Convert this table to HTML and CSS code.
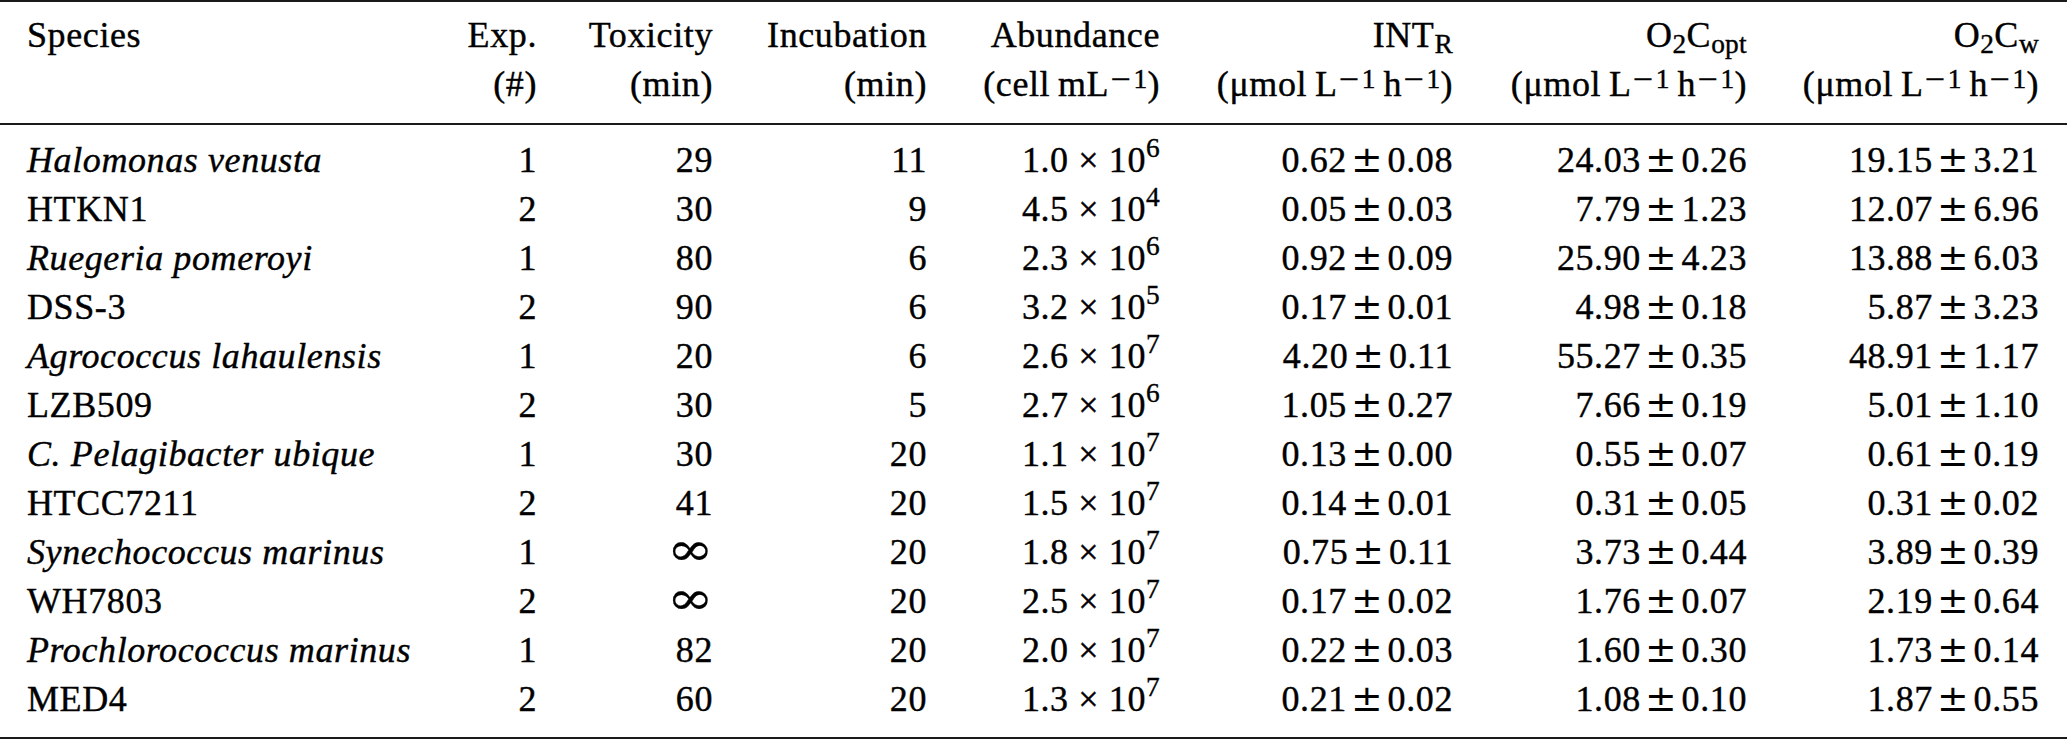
FILE: index.html
```html
<!DOCTYPE html>
<html lang="en">
<head>
<meta charset="utf-8">
<title>Species table</title>
<link rel="stylesheet" href="styles.css">
</head>
<body>
<div class="table">
  <div class="head">
    <div class="row">
      <div class="c first">Species</div>
      <div class="c">Exp.</div>
      <div class="c">Toxicity</div>
      <div class="c">Incubation</div>
      <div class="c">Abundance</div>
      <div class="c">INT<sub>R</sub></div>
      <div class="c">O<sub>2</sub>C<sub>opt</sub></div>
      <div class="c last">O<sub>2</sub>C<sub>w</sub></div>
    </div>
    <div class="row">
      <div class="c first"></div>
      <div class="c">(#)</div>
      <div class="c">(min)</div>
      <div class="c">(min)</div>
      <div class="c">(cell&#8201;mL<sup class="u"><span class="mi">&minus;</span>1</sup>)</div>
      <div class="c">(μmol&#8201;L<sup class="u"><span class="mi">&minus;</span>1</sup>&#8201;h<sup class="u"><span class="mi">&minus;</span>1</sup>)</div>
      <div class="c">(μmol&#8201;L<sup class="u"><span class="mi">&minus;</span>1</sup>&#8201;h<sup class="u"><span class="mi">&minus;</span>1</sup>)</div>
      <div class="c last">(μmol&#8201;L<sup class="u"><span class="mi">&minus;</span>1</sup>&#8201;h<sup class="u"><span class="mi">&minus;</span>1</sup>)</div>
    </div>
  </div>
  <div class="body">
    <div class="row"><div class="c first it">Halomonas venusta</div><div class="c">1</div><div class="c">29</div><div class="c">11</div><div class="c">1.0 × 10<sup>6</sup></div><div class="c">0.62<span class="pm">±</span>0.08</div><div class="c">24.03<span class="pm">±</span>0.26</div><div class="c last">19.15<span class="pm">±</span>3.21</div></div>
    <div class="row"><div class="c first">HTKN1</div><div class="c">2</div><div class="c">30</div><div class="c">9</div><div class="c">4.5 × 10<sup>4</sup></div><div class="c">0.05<span class="pm">±</span>0.03</div><div class="c">7.79<span class="pm">±</span>1.23</div><div class="c last">12.07<span class="pm">±</span>6.96</div></div>
    <div class="row"><div class="c first it">Ruegeria pomeroyi</div><div class="c">1</div><div class="c">80</div><div class="c">6</div><div class="c">2.3 × 10<sup>6</sup></div><div class="c">0.92<span class="pm">±</span>0.09</div><div class="c">25.90<span class="pm">±</span>4.23</div><div class="c last">13.88<span class="pm">±</span>6.03</div></div>
    <div class="row"><div class="c first">DSS-3</div><div class="c">2</div><div class="c">90</div><div class="c">6</div><div class="c">3.2 × 10<sup>5</sup></div><div class="c">0.17<span class="pm">±</span>0.01</div><div class="c">4.98<span class="pm">±</span>0.18</div><div class="c last">5.87<span class="pm">±</span>3.23</div></div>
    <div class="row"><div class="c first it">Agrococcus lahaulensis</div><div class="c">1</div><div class="c">20</div><div class="c">6</div><div class="c">2.6 × 10<sup>7</sup></div><div class="c">4.20<span class="pm">±</span>0.11</div><div class="c">55.27<span class="pm">±</span>0.35</div><div class="c last">48.91<span class="pm">±</span>1.17</div></div>
    <div class="row"><div class="c first">LZB509</div><div class="c">2</div><div class="c">30</div><div class="c">5</div><div class="c">2.7 × 10<sup>6</sup></div><div class="c">1.05<span class="pm">±</span>0.27</div><div class="c">7.66<span class="pm">±</span>0.19</div><div class="c last">5.01<span class="pm">±</span>1.10</div></div>
    <div class="row"><div class="c first it">C. Pelagibacter ubique</div><div class="c">1</div><div class="c">30</div><div class="c">20</div><div class="c">1.1 × 10<sup>7</sup></div><div class="c">0.13<span class="pm">±</span>0.00</div><div class="c">0.55<span class="pm">±</span>0.07</div><div class="c last">0.61<span class="pm">±</span>0.19</div></div>
    <div class="row"><div class="c first">HTCC7211</div><div class="c">2</div><div class="c">41</div><div class="c">20</div><div class="c">1.5 × 10<sup>7</sup></div><div class="c">0.14<span class="pm">±</span>0.01</div><div class="c">0.31<span class="pm">±</span>0.05</div><div class="c last">0.31<span class="pm">±</span>0.02</div></div>
    <div class="row"><div class="c first it">Synechococcus marinus</div><div class="c">1</div><div class="c"><span class="inf">∞</span></div><div class="c">20</div><div class="c">1.8 × 10<sup>7</sup></div><div class="c">0.75<span class="pm">±</span>0.11</div><div class="c">3.73<span class="pm">±</span>0.44</div><div class="c last">3.89<span class="pm">±</span>0.39</div></div>
    <div class="row"><div class="c first">WH7803</div><div class="c">2</div><div class="c"><span class="inf">∞</span></div><div class="c">20</div><div class="c">2.5 × 10<sup>7</sup></div><div class="c">0.17<span class="pm">±</span>0.02</div><div class="c">1.76<span class="pm">±</span>0.07</div><div class="c last">2.19<span class="pm">±</span>0.64</div></div>
    <div class="row"><div class="c first it">Prochlorococcus marinus</div><div class="c">1</div><div class="c">82</div><div class="c">20</div><div class="c">2.0 × 10<sup>7</sup></div><div class="c">0.22<span class="pm">±</span>0.03</div><div class="c">1.60<span class="pm">±</span>0.30</div><div class="c last">1.73<span class="pm">±</span>0.14</div></div>
    <div class="row"><div class="c first">MED4</div><div class="c">2</div><div class="c">60</div><div class="c">20</div><div class="c">1.3 × 10<sup>7</sup></div><div class="c">0.21<span class="pm">±</span>0.02</div><div class="c">1.08<span class="pm">±</span>0.10</div><div class="c last">1.87<span class="pm">±</span>0.55</div></div>
  </div>
</div>
</body>
</html>
```

FILE: styles.css
```css
html, body {
  margin: 0;
  padding: 0;
  background: #ffffff;
}

body {
  font-family: "Liberation Serif", "Times New Roman", serif;
  font-size: 36px;
  letter-spacing: 0.6px;
  color: #000000;
  -webkit-text-stroke: 0.4px #000000;
}

.table {
  width: 2067px;
}

.head {
  border-top: 2px solid #1a1a1a;
  border-bottom: 2px solid #1a1a1a;
  padding: 9px 0 14px;
}

.body {
  padding: 11px 0 13px;
  border-bottom: 2px solid #1a1a1a;
}

.row {
  display: grid;
  grid-template-columns: 400px 137px 176px 214px 233px 293px 294px 320px;
  height: 49px;
  line-height: 49px;
}

.c {
  text-align: right;
  white-space: nowrap;
}

.c.first {
  text-align: left;
  padding-left: 27px;
}

.c.last {
  padding-right: 28px;
}

.it {
  font-style: italic;
}

.pm {
  font-family: "DejaVu Serif", "Liberation Serif", serif;
  font-size: 1.05em;
  line-height: 0;
  letter-spacing: 0;
  margin: 0 5px 0 4px;
  -webkit-text-stroke: 0;
}

.inf {
  display: inline-block;
  font-family: "DejaVu Serif", "Liberation Serif", serif;
  font-size: 1.15em;
  line-height: 1;
  letter-spacing: 0;
  transform: scale(1.35, 1.12);
  transform-origin: right 70%;
  -webkit-text-stroke: 0.2px #000000;
}

sup, sub {
  font-size: 0.76em;
  line-height: 0;
  letter-spacing: 0.3px;
}

sup {
  vertical-align: 0.55em;
}

sup.u {
  vertical-align: 0.3em;
}

.mi {
  font-family: "DejaVu Serif", "Liberation Serif", serif;
  -webkit-text-stroke: 0;
  margin-right: 1px;
}

sub {
  vertical-align: -0.22em;
}
```
